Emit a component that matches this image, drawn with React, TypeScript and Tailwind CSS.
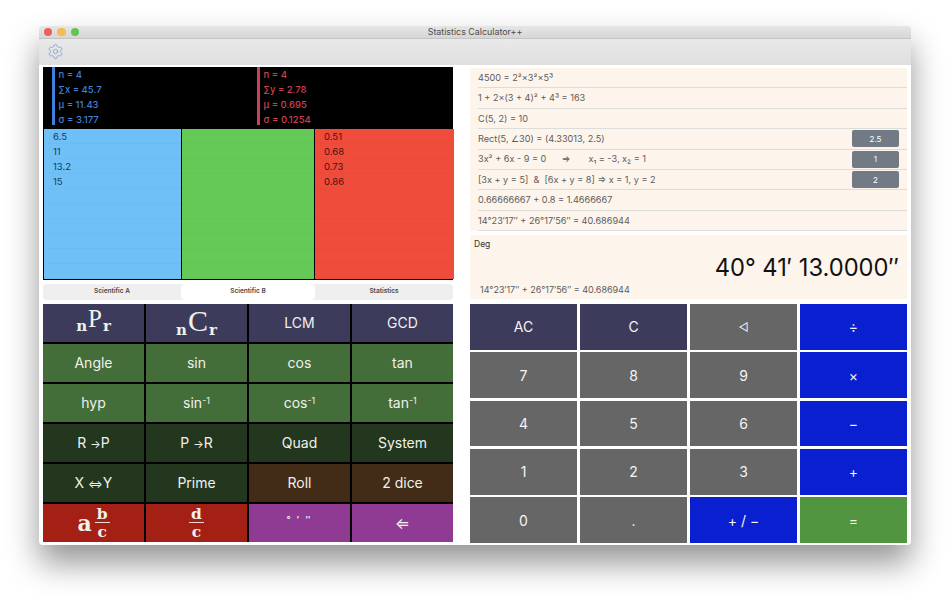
import { Settings } from "lucide-react";

const history = [
  { text: "4500 = 2²×3²×5³" },
  { text: "1 + 2×(3 + 4)² + 4³ = 163" },
  { text: "C(5, 2) = 10" },
  { text: "Rect(5, ∠30) = (4.33013, 2.5)", value: "2.5" },
  { text: "3x² + 6x - 9 = 0      ⇒       x₁ = -3, x₂ = 1", value: "1" },
  { text: "[3x + y = 5]  &  [6x + y = 8] ⇒ x = 1, y = 2", value: "2" },
  { text: "0.66666667 + 0.8 = 1.4666667" },
  { text: "14°23′17″ + 26°17′56″ = 40.686944" },
];

const navy = "bg-[#3c3b5c]";
const green = "bg-[#436d39]";
const darkGreen = "bg-[#22371e]";
const brown = "bg-[#422c18]";
const red = "bg-[#a52014]";
const purple = "bg-[#8f3b94]";

const Perm = ({ big, large }: { big: string; large?: boolean }) => (
  <span className={`flex items-baseline leading-none ${large ? "translate-y-[2px]" : ""}`}>
    <span className="text-[15px] font-bold font-['DejaVu_Serif',serif]">n</span>
    <span className={`mx-[1px] font-['Liberation_Serif',serif] relative -top-[4px] ${large ? "text-[30px]" : "text-[25px]"}`}>{big}</span>
    <span className="text-[15px] font-bold font-['DejaVu_Serif',serif]">r</span>
  </span>
);

const Fraction = ({ whole }: { whole?: string }) => (
  <span className="flex items-center gap-[3px] font-['DejaVu_Serif',serif] font-bold">
    {whole && <span className="text-[22px] leading-none">{whole}</span>}
    <span className="flex flex-col items-center text-[15.5px] leading-[17.5px]">
      <span className="border-b border-[#f3d9d3] px-[2px]">{whole ? "b" : "d"}</span>
      <span>c</span>
    </span>
  </span>
);

const Inverse = ({ name }: { name: string }) => (
  <span>
    {name}
    <sup className="text-[9px]">-1</sup>
  </span>
);

const Arrow = ({ from, glyph, to }: { from: string; glyph: string; to: string }) => (
  <span>
    {from} <span className="text-[11px]">{glyph}</span>
    {to}
  </span>
);

const leftKeys: { label: React.ReactNode; bg: string }[] = [
  { label: <Perm big="P" />, bg: navy },
  { label: <Perm big="C" large />, bg: navy },
  { label: "LCM", bg: navy },
  { label: "GCD", bg: navy },
  { label: "Angle", bg: green },
  { label: "sin", bg: green },
  { label: "cos", bg: green },
  { label: "tan", bg: green },
  { label: "hyp", bg: green },
  { label: <Inverse name="sin" />, bg: green },
  { label: <Inverse name="cos" />, bg: green },
  { label: <Inverse name="tan" />, bg: green },
  { label: <Arrow from="R" glyph="→" to="P" />, bg: darkGreen },
  { label: <Arrow from="P" glyph="→" to="R" />, bg: darkGreen },
  { label: "Quad", bg: darkGreen },
  { label: "System", bg: darkGreen },
  { label: <Arrow from="X" glyph="⇔" to="Y" />, bg: darkGreen },
  { label: "Prime", bg: darkGreen },
  { label: "Roll", bg: brown },
  { label: "2 dice", bg: brown },
  { label: <Fraction whole="a" />, bg: red },
  { label: <Fraction />, bg: red },
  { label: <span className="text-[9px] tracking-[2px] font-bold -translate-y-[3px]">° ′ ″</span>, bg: purple },
  { label: <span className="text-[16px]">⇐</span>, bg: purple },
];

const gray = "bg-[#666666]";
const blue = "bg-[#0a20d0]";

const rightKeys: { label: React.ReactNode; bg: string }[] = [
  { label: "AC", bg: navy },
  { label: "C", bg: navy },
  { label: <span className="text-[11px]">◁</span>, bg: gray },
  { label: "÷", bg: blue },
  { label: "7", bg: gray },
  { label: "8", bg: gray },
  { label: "9", bg: gray },
  { label: "×", bg: blue },
  { label: "4", bg: gray },
  { label: "5", bg: gray },
  { label: "6", bg: gray },
  { label: "−", bg: blue },
  { label: "1", bg: gray },
  { label: "2", bg: gray },
  { label: "3", bg: gray },
  { label: "+", bg: blue },
  { label: "0", bg: gray },
  { label: ".", bg: gray },
  { label: "+ / −", bg: blue },
  { label: "=", bg: "bg-[#529541]" },
];

const Stats = ({ name, n, sum, mean, sd, className }: { name: string; n: string; sum: string; mean: string; sd: string; className: string }) => (
  <div className={className}>
    <div className="h-[58px] border-l-[3px] border-current pl-[4px] text-[9.5px] font-medium leading-[15px]">
      <div>n = {n}</div>
      <div>∑{name} = {sum}</div>
      <div>μ = {mean}</div>
      <div>σ = {sd}</div>
    </div>
  </div>
);

const Column = ({ values, className }: { values: string[]; className: string }) => (
  <div className={`overflow-hidden text-[9.5px] leading-[15px] ${className}`}>
    {Array.from({ length: 10 }, (_, i) => (
      <div key={i} className="h-[15px] pl-[9px] border-b border-black/[0.02]">
        {values[i]}
      </div>
    ))}
  </div>
);

export default function App() {
  return (
    <div className="w-[950px] h-[594px] bg-white pt-[26px] pl-[39px] overflow-hidden font-['Inter',sans-serif]">
      <div className="w-[872px] h-[519px] flex flex-col bg-white rounded-[4px] overflow-hidden shadow-[0_18px_32px_rgba(0,0,0,0.42)]">
        <div className="h-[12.5px] shrink-0 flex items-center justify-center relative bg-linear-to-b from-[#e6e6e6] to-[#d6d6d6] border-b border-[#c4c4c4]">
          <div className="absolute left-[4.7px] top-[1.7px] flex gap-[5px]">
            <span className="w-[8.5px] h-[8.5px] rounded-full bg-[#ec5f57]" />
            <span className="w-[8.5px] h-[8.5px] rounded-full bg-[#f5bd4f]" />
            <span className="w-[8.5px] h-[8.5px] rounded-full bg-[#62c454]" />
          </div>
          <span className="text-[8.9px] leading-none text-[#4c4c4c] mt-[1px]">Statistics Calculator++</span>
        </div>
        <div className="h-[26px] shrink-0 flex items-center pl-[8px] bg-linear-to-b from-[#e9e9e9] to-[#dfdfdf]">
          <Settings size={17} strokeWidth={1} className="text-[#6a94e4]" />
        </div>
        <div className="flex-1 flex pl-[4px] pt-[2.5px] pr-[4px]">
          <div className="w-[410px] flex flex-col">
            <div className="h-[62px] bg-black flex pl-[8.5px]">
              <Stats name="x" n="4" sum="45.7" mean="11.43" sd="3.177" className="w-[205px] text-[#3f80da]" />
              <Stats name="y" n="4" sum="2.78" mean="0.695" sd="0.1254" className="flex-1 text-[#cc4055]" />
            </div>
            <div className="h-[151px] grid grid-cols-[138px_133px_139px] bg-black border-x border-b border-black">
              <Column values={["6.5", "11", "13.2", "15"]} className="bg-[#6fc0f7] mr-[1px] text-[#163d58]" />
              <Column values={[]} className="bg-[#65c958] mr-[1px]" />
              <Column values={["0.51", "0.68", "0.73", "0.86"]} className="bg-[#ef4c3c] text-[#45140e]" />
            </div>
            <div className="mt-[4px] h-[16px] grid grid-cols-[138px_134px_138px] items-stretch rounded-[4px] bg-[#efeff0] text-[6.5px] font-semibold text-[#4a4a4a]">
              <div className="flex items-center justify-center">Scientific A</div>
              <div className="flex items-center justify-center rounded-[4px] bg-white">Scientific B</div>
              <div className="flex items-center justify-center">Statistics</div>
            </div>
            <div className="mt-[3.5px] h-[238px] grid grid-cols-4 grid-rows-6 gap-[2px] bg-black">
              {leftKeys.map((k, i) => (
                <div key={i} className={`flex items-center justify-center overflow-hidden text-[14px] text-[#f1f1ec] ${k.bg}`}>
                  {k.label}
                </div>
              ))}
            </div>
          </div>
          <div className="w-[437px] ml-[17px] flex flex-col">
            <div className="mt-[1px] h-[163px] bg-[#fdf5ec] pl-[8px] text-[9.15px] text-[#5c5c5c]">
              {history.map((row) => (
                <div key={row.text} className="h-[20.4px] flex items-center justify-between pr-[8px] border-b border-[#dcdcd8] whitespace-pre">
                  <span>{row.text}</span>
                  {row.value && (
                    <span className="w-[47px] h-[17px] flex items-center justify-center rounded-[2px] bg-[#727b85] text-[8px] text-white">
                      {row.value}
                    </span>
                  )}
                </div>
              ))}
            </div>
            <div className="mt-[4px] h-[64px] bg-[#fdf5ec] flex flex-col pt-[4px] px-[4px]">
              <div className="text-[8.5px] leading-[10px] text-[#333333]">Deg</div>
              <div className="mt-[3.5px] pr-[4px] text-right text-[23.7px] leading-[30px] text-[#111111]">40° 41′ 13.0000″</div>
              <div className="mt-[2px] pl-[6px] text-[9px] leading-[10px] text-[#5c5c5c]">14°23′17″ + 26°17′56″ = 40.686944</div>
            </div>
            <div className="mt-[5px] h-[239px] grid grid-cols-4 grid-rows-5 gap-x-[3px] gap-y-[2.5px]">
              {rightKeys.map((k, i) => (
                <div key={i} className={`flex items-center justify-center text-[14px] text-[#f4f4f4] ${k.bg}`}>
                  {k.label}
                </div>
              ))}
            </div>
          </div>
        </div>
      </div>
    </div>
  );
}
